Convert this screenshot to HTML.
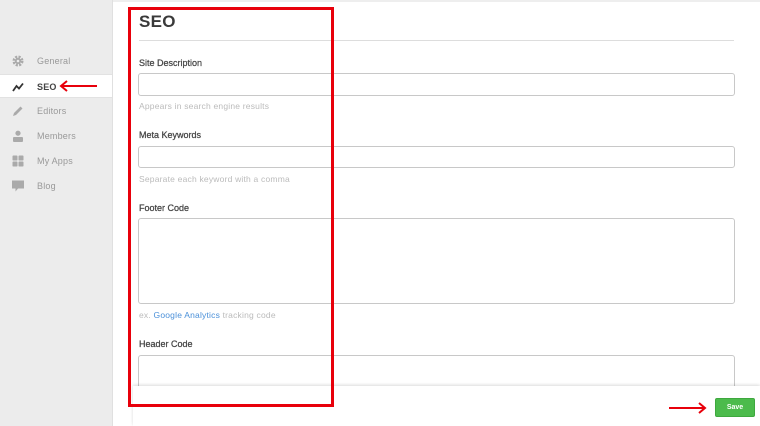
<!DOCTYPE html>
<html><head><style>
*{box-sizing:border-box;margin:0;padding:0}
body{width:760px;height:426px;overflow:hidden;background:#fff;font-family:"Liberation Sans",sans-serif;position:relative}
.side{position:absolute;left:0;top:0;width:113px;height:426px;background:#ececec;border-right:1px solid #e0e0e0}
.item{position:absolute;left:0;width:112px;height:24px;font-size:9px;color:#999;line-height:24px;padding-left:37px;letter-spacing:.2px}
.item.act{background:#fff;color:#444;font-weight:bold;border-top:1px solid #e2e2e2;border-bottom:1px solid #e2e2e2}
.ic{position:absolute;left:12px;top:6px;width:12px;height:12px}
.topbar{position:absolute;left:113px;top:0;width:647px;height:2px;background:#eee}
.abs{position:absolute}
h1{position:absolute;left:139px;top:12px;font-size:17px;color:#3a3a3a;font-weight:bold;letter-spacing:.3px}
.hr{position:absolute;left:139px;top:40px;width:595px;height:1px;background:#ddd}
.lab{position:absolute;left:139px;font-size:9px;color:#444;-webkit-text-stroke:.25px #444}
.help{position:absolute;left:139px;font-size:8.5px;color:#bbb;letter-spacing:.2px}
.inp{position:absolute;left:138px;width:597px;border:1px solid #c8c8c8;border-radius:3px;background:#fff}
.bottom{position:absolute;left:133px;top:386px;width:627px;height:40px;background:#fff;box-shadow:0 -1px 3px rgba(0,0,0,.15)}
.save{position:absolute;left:715px;top:398px;width:40px;height:19px;background:#4cbb4c;border:1px solid #3ea83e;border-radius:2px;color:#fff;font-size:7px;font-weight:bold;text-align:center;line-height:17px}
.red{position:absolute;left:128px;top:7px;width:206px;height:400px;border:3px solid #e8000b}
</style></head><body>
<div class="side">
 <div class="item" style="top:49px"><svg class="ic" viewBox="0 0 12 12"><circle cx="6" cy="6" r="4" fill="none" stroke="#aaa" stroke-width="3" stroke-dasharray="2 1.2"/><circle cx="6" cy="6" r="3" fill="#aaa"/><circle cx="6" cy="6" r="1.3" fill="#ececec"/></svg>General</div>
 <div class="item act" style="top:74px"><svg class="ic" viewBox="0 0 12 12"><path d="M1 10 L4.5 5 L7 7.5 L11 2.5" fill="none" stroke="#333" stroke-width="1.8"/></svg>SEO</div>
 <div class="item" style="top:99px"><svg class="ic" viewBox="0 0 12 12"><path d="M1 11 L2 8 L8.5 1.5 L10.5 3.5 L4 10Z" fill="#aaa"/></svg>Editors</div>
 <div class="item" style="top:124px"><svg class="ic" viewBox="0 0 12 12"><circle cx="6" cy="3.2" r="2.6" fill="#aaa"/><rect x="1" y="7" width="10" height="5" rx="1" fill="#aaa"/></svg>Members</div>
 <div class="item" style="top:149px"><svg class="ic" viewBox="0 0 12 12"><rect x="0.5" y="0.5" width="5" height="5" rx=".8" fill="#aaa"/><rect x="6.5" y="0.5" width="5" height="5" rx=".8" fill="#aaa"/><rect x="0.5" y="6.5" width="5" height="5" rx=".8" fill="#aaa"/><rect x="6.5" y="6.5" width="5" height="5" rx=".8" fill="#aaa"/></svg>My Apps</div>
 <div class="item" style="top:174px"><svg class="ic" viewBox="0 0 12 12"><path d="M0 0.5H12V8.5H6L3.5 11.5V8.5H0Z" fill="#aaa"/></svg>Blog</div>
</div>
<svg class="abs" style="left:58px;top:80px" width="40" height="12"><path d="M39 6 H4 M9 1 L3 6 L9 11" fill="none" stroke="#e8000b" stroke-width="2"/></svg>
<div class="topbar"></div>
<h1>SEO</h1>
<div class="hr"></div>
<div class="lab" style="top:58px">Site Description</div>
<div class="inp" style="top:73px;height:23px"></div>
<div class="help" style="top:101px">Appears in search engine results</div>
<div class="lab" style="top:130px">Meta Keywords</div>
<div class="inp" style="top:146px;height:22px"></div>
<div class="help" style="top:174px">Separate each keyword with a comma</div>
<div class="lab" style="top:203px">Footer Code</div>
<div class="inp" style="top:218px;height:86px"></div>
<div class="help" style="top:310px">ex. <span style="color:#4a90d9">Google Analytics</span> tracking code</div>
<div class="lab" style="top:339px">Header Code</div>
<div class="inp" style="top:355px;height:40px"></div>
<div class="bottom"></div>
<div class="red"></div>
<svg class="abs" style="left:668px;top:402px" width="40" height="12"><path d="M1 6 H36 M31 1 L37 6 L31 11" fill="none" stroke="#e8000b" stroke-width="2"/></svg>
<div class="save">Save</div>
</body></html>
